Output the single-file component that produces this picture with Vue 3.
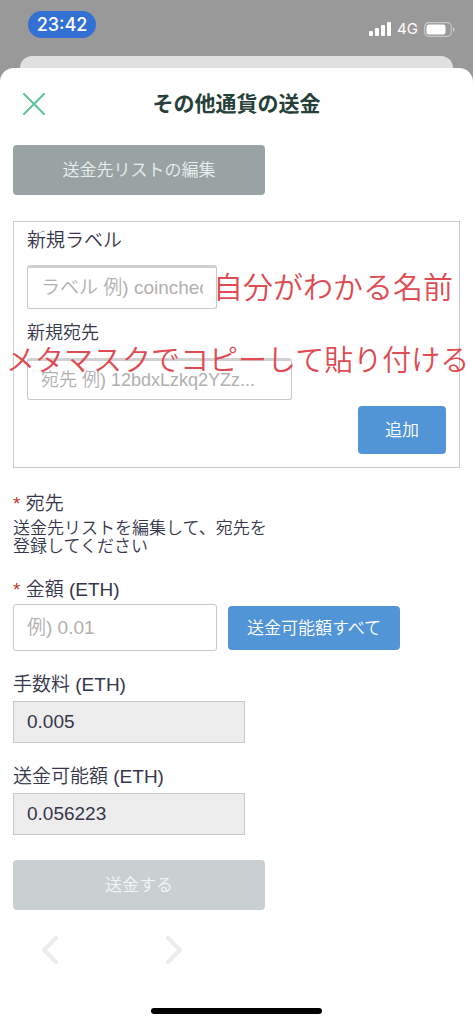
<template>
    <div class="screen">
        <header class="status-bar">
            <time class="clock">23:42</time>
            <div class="status-icons">
                <svg class="signal" viewBox="0 0 22 14" aria-hidden="true">
                    <rect x="0" y="9" width="4" height="5" rx="1" />
                    <rect x="6" y="6" width="4" height="8" rx="1" />
                    <rect x="12" y="3" width="4" height="11" rx="1" />
                    <rect x="18" y="0" width="4" height="14" rx="1" />
                </svg>
                <span class="network">4G</span>
                <svg class="battery" viewBox="0 0 31 15" aria-hidden="true">
                    <rect x="0.7" y="0.7" width="26.6" height="13.6" rx="4" fill="none" stroke="#c8c8c8" stroke-width="1.2" />
                    <rect x="2.5" y="2.5" width="19" height="10" rx="2.2" fill="#fff" />
                    <path d="M29 5 Q30.8 6 30.8 7.5 Q30.8 9 29 10 Z" fill="#c8c8c8" />
                </svg>
            </div>
        </header>
        <div class="back-sheet"></div>

        <main class="sheet">
            <div class="sheet-header">
                <button type="button" class="close" aria-label="閉じる">
                    <svg viewBox="0 0 22 22" aria-hidden="true">
                        <path d="M1 1 L21 21 M21 1 L1 21" />
                    </svg>
                </button>
                <h1>その他通貨の送金</h1>
            </div>

            <form class="content" @submit.prevent>
                <button type="button" class="btn btn-gray">送金先リストの編集</button>

                <section class="new-address">
                    <label for="label">新規ラベル</label>
                    <div class="field">
                        <input id="label" v-model="newLabel" type="text" class="input-label" placeholder="ラベル 例) coincheck" />
                        <span class="note note-label">自分がわかる名前</span>
                    </div>
                    <label for="address" class="label-address">新規宛先</label>
                    <div class="field">
                        <input id="address" v-model="newAddress" type="text" class="input-address" placeholder="宛先 例) 12bdxLzkq2YZz..." />
                        <span class="note note-address">メタマスクでコピーして貼り付ける</span>
                    </div>
                    <button type="button" class="btn btn-blue btn-add">追加</button>
                </section>

                <div class="group group-to">
                    <p class="caption"><span class="required">*</span> 宛先</p>
                    <p class="message">送金先リストを編集して、宛先を登録してください</p>
                </div>

                <div class="group group-amount">
                    <label for="amount"><span class="required">*</span> 金額 (ETH)</label>
                    <div class="amount-row">
                        <input id="amount" v-model="amount" type="text" class="input-amount" placeholder="例) 0.01" />
                        <button type="button" class="btn btn-blue btn-all">送金可能額すべて</button>
                    </div>
                </div>

                <div v-for="item in readonlyFields" :key="item.id" class="group">
                    <label :for="item.id">{{ item.label }}</label>
                    <input :id="item.id" type="text" class="input-readonly" :value="item.value" readonly />
                </div>

                <button type="submit" class="btn btn-gray btn-send" disabled>送金する</button>
            </form>

            <nav class="pager">
                <button type="button" aria-label="戻る" disabled>
                    <svg viewBox="0 0 18 28" aria-hidden="true"><path d="M15 2 L3 14 L15 26" /></svg>
                </button>
                <button type="button" aria-label="進む" disabled>
                    <svg viewBox="0 0 18 28" aria-hidden="true"><path d="M3 2 L15 14 L3 26" /></svg>
                </button>
            </nav>
            <div class="home-bar"></div>
        </main>
    </div>
</template>

<script setup>
import { ref } from "vue";

const newLabel = ref("");
const newAddress = ref("");
const amount = ref("");

const readonlyFields = [
    { id: "fee", label: "手数料 (ETH)", value: "0.005" },
    { id: "available", label: "送金可能額 (ETH)", value: "0.056223" },
];
</script>

<style>
body {
    background: #999;
}
</style>

<style scoped>
* {
    box-sizing: border-box;
}
.screen {
    display: flex;
    flex-direction: column;
    min-height: 100vh;
    color: #35364a;
    font-family: "Liberation Sans", "Noto Sans CJK JP", sans-serif;
    font-weight: 350;
    font-size: 19px;
}
button,
input {
    font: inherit;
    margin: 0;
}
h1,
p {
    margin: 0;
}
.status-bar {
    display: flex;
    align-items: flex-start;
    justify-content: space-between;
    height: 56px;
    padding: 11px 18px 0 28px;
    font-family: Inter, sans-serif;
    color: #fff;
}
.clock {
    width: 68px;
    border-radius: 14px;
    background: #3370d4;
    font-size: 18px;
    font-weight: 500;
    line-height: 27px;
    text-align: center;
}
.status-icons {
    display: flex;
    align-items: center;
    gap: 6px;
    padding-top: 8px;
}
.signal {
    width: 22px;
    height: 14px;
    fill: #fff;
}
.network {
    font-size: 15px;
    font-weight: 400;
    line-height: 20px;
}
.battery {
    width: 31px;
    height: 15px;
}
.back-sheet {
    height: 12px;
    margin: 0 20px;
    border-radius: 12px 12px 0 0;
    background: #e0e0e0;
}
.sheet {
    display: flex;
    flex: 1;
    flex-direction: column;
    padding-bottom: 10px;
    border-radius: 14px 14px 0 0;
    background: #fff;
}
.sheet-header {
    display: grid;
    grid-template-columns: 44px 1fr 44px;
    align-items: center;
    height: 77px;
    padding: 0 12px 6px;
}
.close {
    display: flex;
    align-items: center;
    justify-content: center;
    height: 44px;
    padding: 0;
    border: 0;
    background: none;
}
.close svg {
    width: 22px;
    height: 22px;
    fill: none;
    stroke: #5cc596;
    stroke-width: 2;
    stroke-linecap: round;
}
h1 {
    color: #263f38;
    font-size: 21px;
    font-weight: 700;
    line-height: 32px;
    text-align: center;
}
.content {
    padding: 0 13px;
}
label,
.caption {
    display: block;
    line-height: 24px;
}
.btn {
    display: block;
    padding: 2px 0 0;
    border: 0;
    border-radius: 4px;
    color: #fff;
    font-size: 17px;
    line-height: 24px;
    text-align: center;
}
.btn-gray {
    width: 252px;
    height: 50px;
    background: #99a3a3;
    color: #e8f0f0;
}
.btn-blue {
    background: #5195d6;
}
input {
    display: block;
    border: 1px solid #c8c8c8;
    border-radius: 3px;
    background: #fff;
    color: #35364a;
    padding: 0 13px;
}
input::placeholder {
    color: #b0b0b0;
    opacity: 1;
}
.new-address {
    margin-top: 26px;
    padding: 7px 13px 13px;
    border: 1px solid #ccc;
}
.label-address {
    margin-top: 12px;
    font-size: 18px;
}
.field {
    position: relative;
}
.input-label,
.input-address {
    border-top: 3px solid #d0d0d0;
}
.input-label {
    width: 190px;
    height: 44px;
    margin-top: 12px;
}
.input-address {
    width: 265px;
    height: 42px;
    margin-top: 13px;
    font-size: 18px;
}
.note {
    position: absolute;
    color: #df4b52;
    line-height: 40px;
    white-space: nowrap;
    pointer-events: none;
}
.note-label {
    top: 3px;
    left: 186px;
    font-size: 30px;
}
.note-address {
    top: -17px;
    left: -21px;
    font-size: 29px;
}
.btn-add {
    width: 88px;
    height: 48px;
    margin: 6px 0 0 auto;
}
.group {
    margin-top: 22px;
}
.group-to {
    margin-top: 24px;
}
.required {
    color: #c0392b;
}
.message {
    max-width: 270px;
    margin-top: 4px;
    font-size: 17px;
    line-height: 18px;
}
.amount-row {
    display: flex;
    align-items: center;
    gap: 11px;
    margin-top: 2px;
}
.input-amount {
    width: 204px;
    height: 47px;
}
.btn-all {
    width: 172px;
    height: 44px;
}
.input-readonly {
    width: 232px;
    height: 42px;
    margin-top: 4px;
    border-radius: 0;
    background: #ededed;
}
.btn-send {
    margin-top: 25px;
}
.btn-send:disabled {
    background: #cad0d2;
    color: #f4f6f6;
}
.pager {
    display: flex;
    gap: 80px;
    margin-top: 18px;
    padding-left: 28px;
}
.pager button {
    display: flex;
    align-items: center;
    justify-content: center;
    width: 44px;
    height: 44px;
    padding: 0;
    border: 0;
    background: none;
}
.pager svg {
    width: 18px;
    height: 28px;
    fill: none;
    stroke: #ebebeb;
    stroke-width: 4;
    stroke-linecap: round;
    stroke-linejoin: round;
}
.home-bar {
    width: 36%;
    height: 6px;
    margin: auto auto 0;
    border-radius: 3px;
    background: #000;
}
</style>
